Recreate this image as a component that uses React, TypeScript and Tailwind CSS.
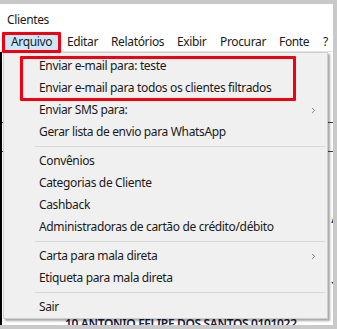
import { ChevronRight } from "lucide-react";

// ====================== MENU DATA ============================
type Entry = { label: string; sub?: boolean } | "sep";

const menuBar = [
  { label: "Arquivo", w: "w-[56px]", active: true },
  { label: "Editar", w: "w-[44px]" },
  { label: "Relatórios", w: "w-[66px]" },
  { label: "Exibir", w: "w-[43px]" },
  { label: "Procurar", w: "w-[59px]" },
  { label: "Fonte", w: "w-[44px]" },
  { label: "?", w: "w-[18px]" },
];

const entries: Entry[] = [
  { label: "Enviar e-mail para: teste" },
  { label: "Enviar e-mail para todos os clientes filtrados" },
  { label: "Enviar SMS para:", sub: true },
  { label: "Gerar lista de envio para WhatsApp" },
  "sep",
  { label: "Convênios" },
  { label: "Categorias de Cliente" },
  { label: "Cashback" },
  { label: "Administradoras de cartão de crédito/débito" },
  "sep",
  { label: "Carta para mala direta", sub: true },
  { label: "Etiqueta para mala direta" },
  "sep",
  { label: "Sair" },
];
// =============================================================

export default function App() {
  return (
    <div
      className="relative w-[337px] h-[329px] overflow-hidden bg-[#c9c9c9] pt-[4px] pr-[4px] pb-[4px] text-[12px] tracking-[-0.35px] text-[#1a1a1a]"
      style={{ fontFamily: '"Noto Sans", "Open Sans", sans-serif' }}
    >
      {/* ===================== WINDOW ======================= */}
      <div className="w-[333px] h-[321px] bg-white flex flex-col">
        {/* Title */}
        <div className="h-[28px] pt-[8px] pl-[7px] leading-[16px]">Clientes</div>

        {/* Menu bar */}
        <div className="h-[20px] flex pl-[3px] border-b border-[#e3e3e3] leading-[19px]">
          {menuBar.map((m) => (
            <span
              key={m.label}
              className={`${m.w} h-[19px] pl-[8px] shrink-0 ${m.active ? "bg-[#cce8ff]" : ""}`}
            >
              {m.label}
            </span>
          ))}
        </div>

        {/* Underlying grid (mostly hidden by the menu) */}
        <div className="flex-1 border-l-2 border-black flex flex-col text-[#1c2240] font-semibold whitespace-nowrap overflow-hidden">
          <div className="h-[71px] shrink-0 border-b border-[#404040]" />
          <div className="h-[29px] shrink-0 border-b border-[#404040]" />
          <div className="h-[60px] shrink-0" />
          <div className="h-[14px] shrink-0 leading-[14px] flex justify-end text-[#1d3f66]">
            <span className="mr-[-6px]">A</span>
          </div>
          <div className="h-[54px] shrink-0" />
          <div className="h-[14px] shrink-0 leading-[14px] flex justify-end">
            <span className="mr-[-5px]">T</span>
          </div>
          <div className="h-[23px] shrink-0" />
          <div className="h-[14px] shrink-0 leading-[14px] pl-[63px]">10 ANTONIO FELIPE DOS SANTOS 0101022</div>
        </div>
      </div>

      {/* ===================== DROPDOWN ======================= */}
      <div className="absolute left-[3px] top-[52px] w-[325px] bg-[#f0f0f0] border border-[#cfcfcf] pt-[2px] shadow-[2px_2px_2px_rgba(0,0,0,0.35)]">
        {entries.map((e, i) =>
          e === "sep" ? (
            <div key={i} className="h-[7px] flex items-center pl-[31px] pr-[2px]">
              <div className="w-full h-px bg-[#d7d7d7]" />
            </div>
          ) : (
            <div key={i} className="relative h-[22px] leading-[22px] pl-[35px]">
              {e.label}
              {e.sub && (
                <ChevronRight
                  className="absolute right-[9px] top-[7px] w-[9px] h-[9px] text-[#333]"
                  strokeWidth={1.6}
                />
              )}
            </div>
          )
        )}
      </div>

      {/* ===================== ANNOTATIONS ======================= */}
      <div className="absolute left-[2px] top-[32px] w-[59px] h-[21px] border-[3px] border-[#f2000d] rounded-[1px]" />
      <div className="absolute left-[20px] top-[56px] w-[276px] h-[45px] border-[3px] border-[#f2000d] rounded-[1px]" />
    </div>
  );
}
